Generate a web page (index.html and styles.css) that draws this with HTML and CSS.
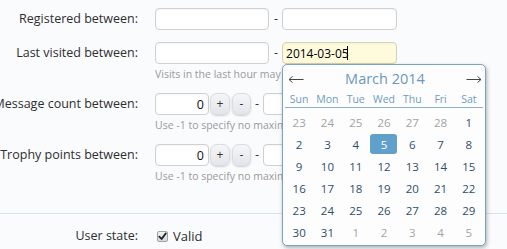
FILE: index.html
```html
<!DOCTYPE html>
<html lang="en">
<head>
<meta charset="utf-8">
<title>Search users</title>
<link rel="stylesheet" href="styles.css">
</head>
<body>
<form class="form">
  <div class="row">
    <label class="label">Registered between:</label>
    <div class="ctrl">
      <div class="pair">
        <input class="text" type="text">
        <span class="dash">-</span>
        <input class="text text-wide" type="text">
      </div>
    </div>
  </div>

  <div class="row">
    <label class="label">Last visited between:</label>
    <div class="ctrl">
      <div class="pair">
        <input class="text" type="text">
        <span class="dash">-</span>
        <span class="focus-wrap">
          <input class="text text-wide text-focus" type="text" value="2014-03-05">
          <span class="caret"></span>
        </span>
      </div>
      <p class="hint">Visits in the last hour may not be included</p>
    </div>
  </div>

  <div class="row">
    <label class="label">Message count between:</label>
    <div class="ctrl">
      <div class="pair">
        <input class="num" type="text" value="0">
        <button class="spin spin-up" type="button">+</button>
        <button class="spin spin-down" type="button">-</button>
        <span class="dash dash-num">-</span>
        <input class="num" type="text">
      </div>
      <p class="hint">Use -1 to specify no maximum.</p>
    </div>
  </div>

  <div class="row">
    <label class="label">Trophy points between:</label>
    <div class="ctrl">
      <div class="pair">
        <input class="num" type="text" value="0">
        <button class="spin spin-up" type="button">+</button>
        <button class="spin spin-down" type="button">-</button>
        <span class="dash dash-num">-</span>
        <input class="num" type="text">
      </div>
      <p class="hint">Use -1 to specify no maximum.</p>
    </div>
  </div>

  <div class="sep"></div>

  <div class="row row-state">
    <label class="label label-state">User state:</label>
    <div class="ctrl">
      <label class="check">
        <span class="box"><svg width="9" height="9" viewBox="0 0 9 9"><path d="M1.3 4.6 L3.6 7 L7.8 1.4" fill="none" stroke="#222" stroke-width="1.8" stroke-linecap="round" stroke-linejoin="round"/></svg></span>
        <span class="check-text">Valid</span>
      </label>
    </div>
  </div>
</form>

<div class="cal">
  <div class="cal-head">
    <span class="cal-nav"><svg width="16" height="9" viewBox="0 0 16 9"><path d="M1 4.5 H15.5 M4.5 1.5 L1 4.5 L4.5 7.5" fill="none" stroke="#444" stroke-width="1"/></svg></span>
    <span class="cal-title">March 2014</span>
    <span class="cal-nav"><svg width="16" height="9" viewBox="0 0 16 9"><path d="M0.5 4.5 H15 M11.5 1.5 L15 4.5 L11.5 7.5" fill="none" stroke="#444" stroke-width="1"/></svg></span>
  </div>
  <div class="cal-names">
    <span>Sun</span><span>Mon</span><span>Tue</span><span>Wed</span><span>Thu</span><span>Fri</span><span>Sat</span>
  </div>
  <div class="cal-days">
    <span class="d other">23</span><span class="d other">24</span><span class="d other">25</span><span class="d other">26</span><span class="d other">27</span><span class="d other">28</span><span class="d">1</span>
    <span class="d">2</span><span class="d">3</span><span class="d">4</span><span class="d"><b class="sel">5</b></span><span class="d">6</span><span class="d">7</span><span class="d">8</span>
    <span class="d">9</span><span class="d">10</span><span class="d">11</span><span class="d">12</span><span class="d">13</span><span class="d">14</span><span class="d">15</span>
    <span class="d">16</span><span class="d">17</span><span class="d">18</span><span class="d">19</span><span class="d">20</span><span class="d">21</span><span class="d">22</span>
    <span class="d">23</span><span class="d">24</span><span class="d">25</span><span class="d">26</span><span class="d">27</span><span class="d">28</span><span class="d">29</span>
    <span class="d">30</span><span class="d">31</span><span class="d other">1</span><span class="d other">2</span><span class="d other">3</span><span class="d other">4</span><span class="d other">5</span>
  </div>
</div>
</body>
</html>
```
FILE: styles.css
```css
* { box-sizing: border-box; }

html, body {
  margin: 0;
  background: #fafbfd;
  font-family: "Open Sans", "Noto Sans", sans-serif;
  color: #333;
  overflow: hidden;
}

.form {
  margin: 0;
  padding-top: 8px;
}

.row {
  display: flex;
  align-items: flex-start;
  margin-bottom: 12px;
}

.label {
  flex: none;
  width: 138px;
  margin-right: 17px;
  display: flex;
  justify-content: flex-end;
  white-space: nowrap;
  font-size: 12.5px;
  line-height: 22px;
  color: #2e2e2e;
}

.ctrl {
  flex: 1;
  min-width: 0;
}

.pair {
  display: flex;
  align-items: center;
  white-space: nowrap;
}

.text, .num {
  height: 22px;
  border: 1px solid #d0d0d0;
  border-radius: 4px;
  background: #fff;
  box-shadow: inset 0 1px 2px rgba(0, 0, 0, 0.04);
  font-family: inherit;
  font-size: 12px;
  color: #111;
  padding: 0 3px;
  margin: 0;
  outline: none;
}

.text { width: 114px; }
.text-wide { width: 115px; }

.focus-wrap {
  position: relative;
  display: inline-flex;
}

.text-focus {
  background: #fdfbdc;
  border-color: #d6d3b4;
  color: #000;
}

.caret {
  position: absolute;
  left: 65px;
  top: 4px;
  width: 1px;
  height: 14px;
  background: #000;
}

.dash {
  font-size: 12.5px;
  line-height: 22px;
  margin: 0 4px 0 5px;
  color: #333;
}

.dash-num { margin: 0 4px 0 4px; }

.num {
  width: 54px;
  text-align: right;
  padding-right: 4px;
  font-size: 12.5px;
}

.spin {
  height: 22px;
  margin: 0;
  padding: 0;
  border: 1px solid #d9dce1;
  border-radius: 7px;
  background: linear-gradient(#f5f6f8, #e2e5ea);
  box-shadow: 0 1px 2px rgba(0, 0, 0, 0.18);
  font-family: inherit;
  font-size: 12px;
  line-height: 20px;
  color: #333;
  text-align: center;
}

.spin-up { width: 20px; margin-left: 1px; }
.spin-down { width: 19px; margin-left: 2px; }

.hint {
  margin: 3px 0 0;
  width: 127px;
  overflow: hidden;
  font-size: 10.5px;
  line-height: 14px;
  color: #9a9a9a;
  white-space: nowrap;
}

.sep {
  margin-top: 30px;
  border-top: 1px solid #d5e7ee;
}

.row-state {
  margin-top: 13px;
}

.label-state { line-height: 18px; }

.check {
  display: flex;
  align-items: center;
  height: 18px;
  padding-left: 2px;
}

.box {
  width: 11px;
  height: 11px;
  border: 1px solid #9ea3a8;
  border-radius: 2px;
  background: linear-gradient(#f2f2f2, #d9d9d9);
  display: flex;
  align-items: center;
  justify-content: center;
}

.check-text {
  margin-left: 5px;
  font-size: 13px;
  color: #2e2e2e;
}

/* date picker popup */
.cal {
  position: absolute;
  left: 282px;
  top: 64px;
  width: 204px;
  background: #fdfdfe;
  border: 1px solid #7aa3bd;
  border-radius: 5px;
  box-shadow: 1px 2px 4px rgba(0, 0, 0, 0.3);
  padding: 0 2px 2px;
}

.cal-head {
  display: flex;
  align-items: center;
  justify-content: space-between;
  padding: 4px 1px 0 3px;
  height: 24px;
}

.cal-nav {
  display: flex;
  align-items: center;
  height: 20px;
  padding-top: 1px;
}

.cal-title {
  font-size: 14.5px;
  line-height: 20px;
  color: #6b98c0;
}

.cal-names {
  display: grid;
  grid-template-columns: repeat(7, 1fr);
  margin-top: 2px;
  height: 17px;
  border-bottom: 1px solid #8db1c8;
}

.cal-names span {
  text-align: center;
  font-size: 10.5px;
  line-height: 16px;
  color: #6e9cc2;
}

.cal-days {
  display: grid;
  grid-template-columns: repeat(7, 1fr);
  grid-auto-rows: 22px;
  padding-top: 3px;
}

.d {
  display: flex;
  align-items: center;
  justify-content: center;
  font-size: 11.5px;
  color: #2f4e6c;
}

.d.other { color: #a3a3a3; }

.sel {
  display: flex;
  align-items: center;
  justify-content: center;
  width: 27px;
  height: 20px;
  border-radius: 3px;
  background: #62a0cc;
  color: #fff;
  font-weight: normal;
}
```
